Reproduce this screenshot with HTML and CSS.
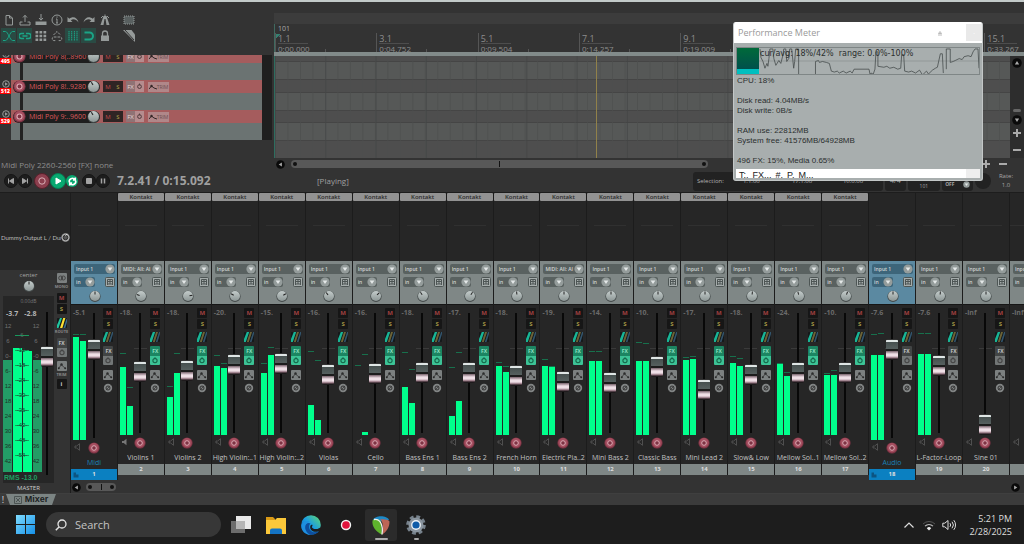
FILE: index.html
```html
<!DOCTYPE html>
<html lang="en">
<head>
<meta charset="utf-8">
<title>Mixer</title>
<link rel="stylesheet" href="styles.css">
</head>
<body>
<svg class="defs" aria-hidden="true">
  <defs>
    <linearGradient id="knobFill" x1="0" y1="0" x2="0" y2="1"><stop offset="0" stop-color="#c4cccb"/><stop offset="1" stop-color="#8c9695"/></linearGradient>
    <linearGradient id="edgeFill" x1="0" y1="1" x2="1" y2="0"><stop offset="0" stop-color="#0b59b0"/><stop offset=".5" stop-color="#1b9de2"/><stop offset="1" stop-color="#63dc6a"/></linearGradient>
    <linearGradient id="winFill" x1="0" y1="0" x2="1" y2="1"><stop offset="0" stop-color="#7fdcff"/><stop offset="1" stop-color="#1590e8"/></linearGradient>
    <symbol id="knob" viewBox="0 0 12 12"><circle cx="6" cy="6.4" r="5.6" fill="#444a4a"/><circle cx="6" cy="6" r="5" fill="url(#knobFill)"/></symbol>
    <symbol id="drop" viewBox="0 0 10 10"><circle cx="5" cy="5" r="4.6" fill="#949c9b"/><path d="M2.6 3.4h4.8L5 7z" fill="#e4e8e8"/></symbol>
    <symbol id="infx" viewBox="0 0 10 10"><rect x=".5" y=".5" width="9" height="9" rx="1" fill="#a4abaa" stroke="#4d5554"/><path d="M2.5 8V2.5h5V8M2.5 4.5h5M5 2.5v2M4 8V6h2v2" fill="none" stroke="#4d5554"/></symbol>
    <symbol id="route" viewBox="0 0 10 10"><rect width="10" height="10" rx="1" fill="#15191a"/><path d="M0 10V7L2.800 0h2.400L1.800 10z" fill="#18b596"/><path d="M2.800 10 6 0h2L4.800 10z" fill="#6d6436"/><path d="M5.800 10 9 0h1v2L7.500 10z" fill="#32546c"/></symbol>
    <symbol id="routeOn" viewBox="0 0 10 10"><rect width="10" height="10" rx="1" fill="#15191a"/><path d="M0 10V7L3 0h2L1.500 10z" fill="#20c5a0"/><path d="M3 10 6.200 0h2.200L5.400 10z" fill="#ffe033"/><path d="M6.500 10 9.500 1h.5v3L8.300 10z" fill="#3c6f90"/></symbol>
    <symbol id="power" viewBox="0 0 10 9"><circle cx="5" cy="4.600" r="2.100" fill="none" stroke="currentColor" stroke-width="1.100"/><path d="M5 1.200v2" stroke="currentColor"/></symbol>
    <symbol id="env" viewBox="0 0 10 10"><rect width="10" height="10" rx="1" fill="#7c8080"/><path d="M1.500 7.500 4.500 3.500l2 2.500 2 1.500" fill="none" stroke="#333" stroke-width=".8"/><circle cx="4.500" cy="3.500" r="1.200" fill="#2b2b2b"/><circle cx="1.800" cy="7.200" r="1" fill="#2b2b2b"/><circle cx="8.200" cy="7.200" r="1" fill="#2b2b2b"/></symbol>
    <symbol id="phase" viewBox="0 0 10 10"><circle cx="5" cy="5" r="4.200" fill="#828585"/><circle cx="5" cy="5" r="2" fill="none" stroke="#333"/><path d="M3 7.200 7 2.800" stroke="#333" stroke-width=".8"/></symbol>
    <symbol id="rec" viewBox="0 0 12 12"><circle cx="6" cy="6" r="5.600" fill="#7e3344"/><circle cx="6" cy="5.700" r="4.700" fill="#a54f60"/><circle cx="6" cy="6" r="2.300" fill="#7e3344" stroke="#dcaab4"/></symbol>
    <symbol id="spk" viewBox="0 0 8 8"><path d="M1 3h1.700L5.500.7v6.600L2.700 5H1z" fill="none" stroke="#5b5b5b" stroke-width=".8"/></symbol>
    <symbol id="spkOn" viewBox="0 0 8 8"><path d="M1 3h1.700L5.500.7v6.600L2.700 5H1z" fill="#777"/></symbol>
    <symbol id="tri" viewBox="0 0 10 10"><circle cx="5" cy="5" r="4.800" fill="#0a0a0a"/><path d="M6.500 2.800v4.400L3 5z" fill="#aaa"/></symbol>
    <symbol id="folder" viewBox="0 0 6 6"><path d="M.5.500h2.500v2h2.500V5.500h-5z" fill="#0c5482"/></symbol>
  </defs>
</svg>

<main class="app">
  <section class="upper">
    <div class="left">
      <div class="toolbar" role="toolbar" aria-label="Main toolbar">
        <button aria-label="New project"><svg viewBox="0 0 12 12"><path d="M3 1.500h3.500L9.500 4v7H3zM6.500 1.500V4h3"/></svg></button>
        <button aria-label="Open"><svg viewBox="0 0 12 12"><path d="M6 8V1.500M4 3.500 6 1.300l2 2.200M3.500 8H1v3h10V8H8.500" /></svg></button>
        <button aria-label="Save"><svg viewBox="0 0 12 12"><path d="M6 0v6M4 4l2 2.200L8 4"/><path class="solid" d="M.5 7.500h11v3.500H.5z"/></svg></button>
        <button aria-label="Project settings"><svg viewBox="0 0 12 12"><circle cx="6" cy="6" r="5"/><path d="M6 5v4M6 2.500v1.200M5 9h2M5 5h1"/></svg></button>
        <button aria-label="Undo"><svg viewBox="0 0 12 12"><path class="solid" d="M.5 3v5h5L3.800 6.300C6 4.500 9 5 11.500 8.500 10.500 3.500 6 1.500 2.300 4.700z"/></svg></button>
        <button aria-label="Redo"><svg viewBox="0 0 12 12"><path class="solid" d="M11.500 3v5h-5l1.700-1.700C6 4.500 3 5 .5 8.500 1.500 3.500 6 1.500 9.700 4.700z"/></svg></button>
        <button aria-label="Metronome"><svg viewBox="0 0 12 12"><path class="solid" d="M4.500 2h3L10.500 11H7.500L6.500 5h-1L4.500 11h-3z"/><path d="M6 4V.5M2 4l2-2M10 4 8 2"/></svg></button>
        <button class="spaced" aria-label="Marquee"><svg viewBox="0 0 12 12"><rect x="1" y="2" width="10" height="8" fill="#596060" stroke-dasharray="1 1"/></svg></button>
        <button class="on" aria-label="Auto crossfade"><svg viewBox="0 0 12 12"><path d="M0 1.500h2.500C5 1.500 7 10.500 9.500 10.500H12M0 10.500h2.500C5 10.500 7 1.500 9.500 1.500H12"/></svg></button>
        <button class="on" aria-label="Item grouping"><svg viewBox="0 0 12 12"><path d="M5 3.500H2.500a2.500 2.500 0 0 0 0 5H5M7 3.500h2.500a2.500 2.500 0 0 1 0 5H7M3.500 6h5" stroke-width="1.400"/></svg></button>
        <button aria-label="Ripple"><svg viewBox="0 0 12 12"><path stroke-width="2.600" stroke-dasharray="2.700 1.300" d="M.5 2.300h11M.5 6h11M.5 9.700h11"/></svg></button>
        <button aria-label="Envelope link"><svg viewBox="0 0 12 12"><path d="M5.500 7H3a1.700 1.700 0 0 0 0 3.600h2M6.500 7H9a1.700 1.700 0 0 1 0 3.600H7M2.500 5 6 1.500 9.500 5" stroke-dasharray="2.500 .7"/></svg></button>
        <button class="on" aria-label="Grid"><svg viewBox="0 0 12 12"><path d="M2 1v10M4.700 1v10M7.400 1v10M10 1v10" stroke-dasharray="1.500 .5"/></svg></button>
        <button class="on" aria-label="Snap"><svg viewBox="0 0 12 12"><path d="M1.500 2.500h5a3.500 3.500 0 0 1 0 7h-5" stroke-width="2"/></svg></button>
        <button aria-label="Lock"><svg viewBox="0 0 12 12"><path d="M3.500 6V3.500a2.500 2.500 0 0 1 5 0V6" stroke-width="1.300"/><path class="solid" d="M2 5.500h8V11H2z"/></svg></button>
        <button class="spaced" aria-label="Draw"><svg viewBox="0 0 12 12"><path class="solid" d="M0 0h8.500l3.500 4.500V12z"/><path d="M2 0l9 10" stroke="#333"/></svg></button>
      </div>
      <div class="tcp" id="tcp"></div>
      <p class="hint">Midi Poly 2260-2560 [FX] none</p>
    </div>

    <div class="arrange">
      <div class="band"></div>
      <div class="ruler" id="ruler"></div>
      <div class="canvas">
        <div class="lanes"><i></i><i></i><i></i><i></i><i></i><i></i><div class="gridlines"></div><div class="playhead"></div></div>
        <div class="vscroll">
          <svg class="up" viewBox="0 0 10 10"><use href="#tri"/></svg>
          <span class="grip"></span>
          <svg class="down" viewBox="0 0 10 10"><use href="#tri"/></svg>
          <button aria-label="Zoom in vertically" class="plus"></button>
          <button aria-label="Zoom out vertically" class="minus"></button>
        </div>
      </div>
      <div class="hscroll">
        <svg class="tri" viewBox="0 0 10 10"><use href="#tri"/></svg>
        <span class="pill"><b></b><i></i><b></b></span>
        <span class="gap"></span>
        <button aria-label="Zoom in" class="plus"></button>
        <button aria-label="Zoom out" class="minus"></button>
      </div>
    </div>
  </section>

  <section class="transport">
    <div class="keys">
      <button aria-label="Go to start"><svg viewBox="0 0 14 14"><path d="M4.500 4.500v5M9.500 4.500v5L5.500 7z"/></svg></button>
      <button aria-label="Go to end"><svg viewBox="0 0 14 14"><path d="M9.500 4.500v5M4.500 4.500v5L8.500 7z"/></svg></button>
      <button class="record" aria-label="Record"><svg viewBox="0 0 14 14"><circle cx="7" cy="7" r="3.200"/></svg></button>
      <button class="play" aria-label="Play"><svg viewBox="0 0 14 14"><path d="M5 4v6l5-3z"/></svg></button>
      <button class="repeat" aria-label="Repeat"><svg viewBox="0 0 14 14"><path d="M3 8a4 4 0 0 1 7-3.500M11 6a4 4 0 0 1-7 3.500M10.500 2v3h-3M3.500 12V9h3" fill="none" stroke-width="2"/></svg></button>
      <button class="stop" aria-label="Stop"><svg viewBox="0 0 14 14"><path d="M4.500 4.500h5v5h-5z"/></svg></button>
      <button aria-label="Pause"><svg viewBox="0 0 14 14"><path d="M5.500 4.500v5M8.500 4.500v5" stroke-width="1.500"/></svg></button>
    </div>
    <output class="clock">7.2.41 / 0:15.092</output>
    <span class="state">[Playing]</span>
    <div class="selection"><span>Selection:</span><span>1.1.00</span><span>17.1.00</span><span>16.0.00</span></div>
    <div class="cell">4/4</div>
    <div class="cell bpm">101</div>
    <div class="cell auto">OFF <svg viewBox="0 0 10 10"><use href="#drop"/></svg></div>
    <div class="dial"></div>
    <div class="rate"><span>Rate:</span><span>1.0</span></div>
  </section>

  <section class="mixer">
    <div class="master">
      <div class="hw"><span>Dummy Output L / Dur</span><svg viewBox="0 0 10 10"><circle cx="5" cy="5" r="4.600" fill="#a8a8a8"/><circle cx="5" cy="5" r="2.500" fill="#555" stroke="#222"/><path d="M5 3l2-2" stroke="#eee"/></svg></div>
      <div class="mbody">
        <div class="mmain">
          <div class="mpan"><span>center</span><svg viewBox="0 0 12 12"><use href="#knob"/><path d="M6 1.500v3" stroke="#222"/></svg></div>
          <div class="mwell">
            <span class="gain">0.00dB</span>
            <div class="peaks"><span>-3.7</span><span>-2.8</span></div>
            <div class="mrow">
              <div class="mmeter">
                <div class="bars"><i class="rms"></i><i class="pk"></i><i class="pk second"></i><i class="rms"></i></div>
                <ol class="side">
                  <li>12</li><li>6</li><li>0-</li><li>6-</li><li>12</li><li>18</li><li>24</li><li>30</li><li>36</li><li>42</li>
                </ol>
                <ol class="mid">
                  <li class="hot">-6-</li><li>-12-</li><li>-18-</li><li>-24-</li><li>-30-</li><li>-36-</li><li>-42-</li><li>-48-</li><li>-54-</li>
                </ol>
                <ol class="side">
                  <li>12</li><li>6</li><li>-0</li><li>-6</li><li>12</li><li>18</li><li>24</li><li>30</li><li>36</li><li>42</li>
                </ol>
              </div>
              <input class="fader" type="range" min="0" max="100" value="75" aria-label="Master volume">
            </div>
            <span class="rmsval">RMS -13.0</span>
          </div>
          <span class="mname">MASTER</span>
        </div>
        <div class="mside">
          <svg class="sq" viewBox="0 0 10 10"><rect width="10" height="10" rx="1" fill="#7c8080"/><circle cx="3.700" cy="5" r="2" fill="none" stroke="#444"/><circle cx="6.300" cy="5" r="2" fill="none" stroke="#444"/></svg>
          <small>MONO</small>
          <button class="btn m">M</button>
          <button class="btn s">S</button>
          <svg class="sq rt" viewBox="0 0 10 10"><use href="#routeOn"/></svg>
          <small>ROUTE</small>
          <div class="fx"><button>FX</button><button aria-label="Bypass effects"><svg viewBox="0 0 10 9"><use href="#power"/></svg></button></div>
          <svg class="sq" viewBox="0 0 10 10"><use href="#env"/></svg>
          <small>TRIM</small>
          <button class="btn info">i</button>
        </div>
      </div>
    </div>
    <div class="bank">
      <div class="strips" id="strips"></div>
      <div class="mscroll">
        <svg class="tri" viewBox="0 0 10 10"><use href="#tri"/></svg>
        <span class="pill"><b></b><i></i><b></b></span>
        <svg class="tri end" viewBox="0 0 10 10"><use href="#tri"/></svg>
      </div>
    </div>
  </section>

  <nav class="dock"><span class="bang">!</span><button class="tab"><svg viewBox="0 0 8 8"><path d="M.5.500h7v7h-7zM2 2l4 4M6 2 2 6" fill="none" stroke="#4c5453"/></svg>Mixer</button></nav>

  <footer class="taskbar">
    <button class="start" aria-label="Start"><svg viewBox="0 0 19 19"><path fill="url(#winFill)" d="M0 0h9v9H0zM10 0h9v9h-9zM0 10h9v9H0zM10 10h9v9h-9z"/></svg></button>
    <label class="search"><svg viewBox="0 0 12 12"><circle cx="7" cy="5" r="4" fill="none" stroke="#e4e4e4" stroke-width="1.300"/><path d="M4 8 .8 11.200" stroke="#e4e4e4" stroke-width="1.500"/></svg><input type="text" placeholder="Search" aria-label="Search"></label>
    <div class="pins">
      <button aria-label="Task view"><svg viewBox="0 0 20 20"><path d="M5 1h15v13H5z" fill="#e9e9e9"/><path d="M0 6h14v12H0z" fill="#777" opacity=".9"/><path d="M5 6h9v8H5z" fill="#b5b5b5"/></svg></button>
      <button aria-label="File Explorer"><svg viewBox="0 0 20 20"><path d="M0 2h7l2 2v4H0z" fill="#d99a16"/><path d="M0 5h9l2-2h9v16H0z" fill="#fbc83a"/><path d="M4 19v-3.500a2 2 0 0 1 2-2h8a2 2 0 0 1 2 2V19z" fill="#1474c4"/></svg></button>
      <button aria-label="Edge"><svg viewBox="0 0 20 20"><circle cx="10" cy="10" r="9.800" fill="url(#edgeFill)"/><path d="M9.500 8.500c-3 3-1 8.500 4 8.700 2 0 4-.7 5-1.700C16.500 19 11 21 6.500 19 3 17 2 12 5 9c1.500-1.300 3.500-1.300 4.500-.5z" fill="#0e4e9e"/><path d="M11 9.500c1 1 .3 2-.2 2.500.4 2 4.500 2.800 7.200 1.200l2.200-1L20 15l-3 1.500c-5 1.500-9-2-7.500-6z" fill="#1d1d1d"/><path d="M.3 10.500C1 7 5 5.500 8.500 6.500 5 8 3.500 11 4.500 14.500 5.300 17 7 19 9.500 19.800 4.500 20 0 16 .3 10.500z" fill="#1e8fe0"/></svg></button>
      <button aria-label="Recorder"><svg viewBox="0 0 20 20"><circle cx="10" cy="10" r="5.200" fill="#f4f4f4"/><circle cx="10" cy="10" r="3.800" fill="#e0143c"/></svg></button>
      <button class="active" aria-label="Reaper"><svg viewBox="0 0 20 20"><path d="M2 5C4 0 16 0 18 5L11 6.500z" fill="#1d8ac8"/><path d="M1.500 5.500C4 3 9 4 10 7l1 12.500C5 17 .5 11 1.500 5.500z" fill="#5fb32d"/><path d="M9 4.500c4-.5 8.500 0 9.500 2 0 6-3 10.500-7.500 13C13 13 12 6 9 4.500z" fill="#bd6556"/><path d="M3 4.500C9 3.500 12.500 10 11 19.500" fill="none" stroke="#f1f1f1" stroke-width="1.300"/></svg></button>
      <button class="running" aria-label="Settings"><svg viewBox="0 0 20 20"><circle cx="10" cy="10" r="8.300" fill="none" stroke="#77828c" stroke-width="3" stroke-dasharray="3.800 2.720"/><circle cx="10" cy="10" r="7.500" fill="#8a959f"/><circle cx="10" cy="10" r="4.900" fill="#eef3f7"/><circle cx="10" cy="10" r="3.600" fill="#0f5ca8"/></svg></button>
    </div>
    <div class="tray">
      <svg viewBox="0 0 14 14"><path d="m2.500 9.500 4.500-4.500 4.500 4.500" fill="none" stroke="#ddd" stroke-width="1.200"/></svg>
      <svg viewBox="0 0 14 14"><path d="M1 6a8.500 8.500 0 0 1 12 0" fill="none" stroke="#555"/><path d="M3 8.200a5.600 5.600 0 0 1 8 0" fill="none" stroke="#bbb" stroke-width="1.100"/><path d="M4.800 10.200a3 3 0 0 1 4.400 0L7 12.500z" fill="#eee"/></svg>
      <svg viewBox="0 0 14 14"><path d="M.8 5.200h2L6 2.500v9L2.800 8.800h-2zM8 5.200a3 3 0 0 1 0 3.600M10 3.700a5 5 0 0 1 0 6.600M11.800 2.200a7.500 7.500 0 0 1 0 9.600" fill="none" stroke="#ddd"/></svg>
      <time><span>5:21 PM</span><span>2/28/2025</span></time>
    </div>
  </footer>
</main>

<aside class="perf" role="dialog" aria-label="Performance Meter">
  <header><h1>Performance Meter</h1><svg viewBox="0 0 6 6"><path d="M1 5h4M1.500 3.500h3L3 1.500z" fill="none" stroke="#aaa" stroke-width=".8"/></svg><button aria-label="Close">·</button></header>
  <div class="graph">
    <div class="load"></div>
    <svg viewBox="0 0 222 27" preserveAspectRatio="none"><path d="M0 13.500h222" stroke="#8a9090" stroke-width=".7"/><path fill="none" stroke="#454b4b" stroke-width=".8" d="M1 1l1 9 2 4 2 7 2-5 1 3 1-8 1-10h3l1 10 2 7 3-5 2 3 2-8 1-7h2l1 13 2-3 1-10h2l2 20 1-7 1-13h3v26M57 27V14l3-1 1 2 3-1 4 1 3 1 2 8 3 1 3-1 2 2 4-2 3 2 4-2 2 2 2-4h15l1 5 2-1 1 2 2-6 1-18h2v15l6 1 3-1 3 2 4-1 4 2 3-1 1-14 2 0 1 17 4 1 3-1 4 2 4-3 3 5 4-4 2 3 4-4 3-2 2-1 3-14 2 0 1 20M189 22V1h4v14l3-1 2-1 4-2 3 1 2-3 4-1 3 1 2-5 2-3h3l1 20"/></svg>
    <span class="avg">cur/avg: 18%/42%&nbsp; range: 0.0%-100%</span>
  </div>
  <pre class="stats">CPU: 18%

Disk read: 4.04MB/s
Disk write: 0B/s

RAM use: 22812MB
System free: 41576MB/64928MB

496 FX: 15%, Media 0.65%</pre>
  <div class="cols"><span>T:.</span><span>FX...</span><span>#.</span><span>P.</span><span>M...</span></div>
</aside>
<script src="app.js"></script>
</body>
</html>
```
FILE: styles.css
```css
* { box-sizing: border-box; }
body, p, h1, ol, pre { margin: 0; padding: 0; }
body { background: #333; color: #a6a6a6; font-family: "Open Sans", "Noto Sans", sans-serif; font-size: 8px; line-height: 10px; }
button, input, select { font: inherit; color: inherit; border: 0; margin: 0; padding: 0; background: none; appearance: none; }
button { display: flex; align-items: center; justify-content: center; }
svg { display: block; flex: none; }
ol { list-style: none; }
.defs { position: absolute; width: 0; height: 0; }
.app { min-height: 100vh; display: flex; flex-direction: column; border-top: 2px solid #c3cac9; overflow: hidden; }

/* upper area */
.upper { display: flex; height: 168px; }
.left { flex: 0 0 274px; display: flex; flex-direction: column; }
.toolbar { display: grid; grid-template-columns: repeat(7, 16px) 32px; grid-auto-rows: 16px; padding: 10px 0 0 1px; height: 53px; }
.toolbar button { height: 15px; width: 15px; }
.toolbar .spaced { margin-left: 8px; }
.toolbar svg { width: 12px; height: 12px; fill: none; stroke: #959a99; }
.toolbar .solid { fill: #959a99; stroke: none; }
.toolbar .on { background: #2a4a43; }
.toolbar .on svg { stroke: #1ba486; }
.tcp { height: 85px; margin-right: 2px; display: flex; flex-direction: column; justify-content: flex-end; overflow: hidden; background: linear-gradient(90deg, transparent 262px, #1f1f1f 262px); }
.track { display: grid; grid-template-columns: 11px 251px; grid-template-rows: 13px 17px; flex: none; }
.track .num { grid-row: 1 / 3; display: flex; flex-direction: column; align-items: center; font: bold 5px/5px "Open Sans", sans-serif; color: #fff; }
.track .num svg { width: 8px; height: 8px; }
.track .num b { background: #f00; width: 11px; height: 6px; line-height: 6px; text-align: center; }
.track .row { background: #a55c5d; display: flex; align-items: center; }
.track .plate { width: 87px; height: 12px; margin-left: 2px; border-radius: 6px; background: #1e1e1e; color: #dc5a5c; display: flex; align-items: center; font-size: 7px; white-space: nowrap; }
.track .plate span { flex: 1; padding-left: 3px; }
.track .plate svg { width: 13px; height: 13px; }
.track .body { background: linear-gradient(90deg, #6b7372 9px, #222 9px 12px, #6b7372 12px); }
.track .pair { display: flex; margin-left: 3px; font: 6px/10px "Open Sans", sans-serif; }
.track .pair button { width: 10px; height: 11px; background: #2f2424; color: #c0494c; }
.track .pair .s { color: #b4a94a; }
.track .pair.f button { background: #8f7375; color: #e4d6d6; width: 9px; }
.track .pair.f button + button { background: #b58c8e; color: #4e3a3b; }
.track .pair svg { width: 9px; height: 9px; }
.track .trim { width: 21px; height: 10px; margin-left: 4px; background: #b08789; color: #6d5051; font: 5px/10px "Open Sans", sans-serif; }
.track .trim svg { width: 8px; height: 8px; }
.hint { padding: 20px 0 0 1px; line-height: 10px; white-space: nowrap; color: #8d8d8d; }

.arrange { flex: 1; min-width: 0; display: flex; flex-direction: column; padding-top: 11px; }
.band { height: 11px; background: #3c3c3c; }
.ruler { height: 28px; display: flex; overflow: hidden; border-left: 1px solid #3f6a60; background: linear-gradient(135deg, #35806f 4px, transparent 4px) 0 10px no-repeat; }
.mark { flex: 0 0 13.530%; padding-left: 3px; color: #8d8d8d; overflow: hidden; background: linear-gradient(#555, #555) 0 100%/1px 19px no-repeat, linear-gradient(#555, #555) 50% 100%/1px 3px no-repeat; }
.mark .tempo { height: 9px; font-size: 7px; line-height: 9px; color: #aaa; }
.mark .beat { width: 30px; height: 11px; font-size: 9px; line-height: 12px; border-bottom: 1px solid #4d4d4d; }
.mark .time { height: 8px; font-size: 8px; line-height: 10px; color: #8d8d8d; white-space: nowrap; }
.canvas { display: flex; flex: 1; border-top: 4px solid #828b8a; }
.lanes { position: relative; flex: 1; display: grid; grid-template-rows: 6px 18px 13px 18px 12px 18px 1fr; background: #4e4e4e; border-left: 1px solid #2e6e60; }
.lanes > i { border-bottom: 1px solid #454545; }
.lanes > i:nth-child(even) { background: #565857; }
.gridlines { position: absolute; inset: 0; background: linear-gradient(90deg, #434545 1px, transparent 1px) 0 0/6.840% 100%, linear-gradient(90deg, #4d4f4e 1px, transparent 1px) 0 0/1.700% 100%; opacity: .7; }
.playhead { position: absolute; top: 0; bottom: 0; left: 43.700%; width: 1px; background: #91814a; }
.vscroll { width: 14px; background: #2d2d2d; display: flex; flex-direction: column; align-items: center; padding-top: 2px; }
.vscroll svg { width: 10px; height: 10px; }
.up { transform: rotate(90deg); }
.down { transform: rotate(-90deg); }
.grip { width: 8px; height: 3px; border-radius: 2px; background: #666; margin: 41px 0 3px; }
.plus, .minus { width: 8px; height: 8px; flex: none; background: linear-gradient(#aaa, #aaa) center/8px 2px no-repeat; }
.plus { background: linear-gradient(#aaa, #aaa) center/8px 2px no-repeat, linear-gradient(#aaa, #aaa) center/2px 8px no-repeat; }
.vscroll .plus { margin-top: 4px; }
.vscroll .minus { margin-top: 9px; }
.hscroll { height: 12px; display: flex; align-items: center; padding: 0 17px 0 2px; background: #333; }
.tri { width: 9px; height: 9px; }
.tri.end { transform: scaleX(-1); margin-left: auto; }
.hscroll .tri { margin-right: 6px; }
.pill { display: flex; align-items: center; justify-content: space-between; height: 8px; padding: 0 2px; border-radius: 4px; background: #585858; }
.hscroll .pill { flex: 0 1 57%; }
.pill b { width: 4px; height: 4px; border-radius: 50%; background: #111; }
.pill i { width: 1px; height: 6px; background: #111; }
.gap { flex: 1; }
.hscroll .minus { margin-left: 9px; }

/* transport */
.transport { height: 22px; display: flex; align-items: center; padding: 0 8px 0 4px; }
.keys { display: flex; align-items: center; }
.keys button { width: 14px; height: 14px; border-radius: 50%; background: #1d1d1d; border: 1px solid #161616; }
.keys svg { width: 14px; height: 14px; fill: #a3a3a3; stroke: #a3a3a3; }
.keys .record { width: 16px; height: 16px; margin-left: 2px; background: #8c3f4e; border-color: #59202b; }
.keys .record svg { fill: none; stroke: #d9b0b6; }
.keys .play { width: 16px; height: 16px; background: #08a870; border-color: #067e54; }
.keys .play svg, .keys .repeat svg { fill: #fff; stroke: #fff; }
.keys .repeat { width: 12px; height: 12px; background: #08a870; border: 0; }
.keys .repeat svg { width: 11px; height: 11px; }
.keys .stop { margin-left: 4px; }
.clock { margin-left: 7px; font-size: 12px; line-height: 16px; font-weight: 700; color: #a0a0a0; white-space: nowrap; flex: 0 0 200px; }
.state { font-size: 8px; color: #a0a0a0; flex: 1; }
.selection { display: grid; grid-template-columns: 46px 49px 51px 36px; height: 19px; width: 190px; padding-left: 4px; margin-right: 2px; align-items: center; background: #222; border-radius: 3px; font-size: 6px; line-height: 8px; color: #b0b0b0; white-space: nowrap; }
.cell { height: 19px; width: 21px; margin-right: 2px; display: flex; align-items: center; justify-content: center; background: #222; border-radius: 3px; font-size: 7px; }
.bpm { width: 32px; font-size: 5px; align-items: flex-end; }
.auto { width: 31px; gap: 8px; font-size: 5px; font-weight: bold; align-items: flex-end; padding-bottom: 3px; line-height: 8px; }
.auto svg { width: 7px; height: 7px; }
.dial { width: 16px; height: 16px; border-radius: 50%; background: #222; margin-right: 8px; }
.rate { display: flex; flex-direction: column; align-items: center; margin-right: 3px; font-size: 6px; line-height: 9px; }

/* mixer */
.mixer { display: flex; height: 301px; border-top: 1px solid #1d1d1d; }
.master { flex: 0 0 71px; min-width: 0; display: flex; flex-direction: column; border-right: 1px solid #1d1d1d; }
.hw { flex: none; height: 77px; background: #262626; display: flex; align-items: center; padding: 12px 0 0 1px; font: 6px/10px Lato, "Open Sans", sans-serif; white-space: nowrap; color: #bbb; }
.hw span { width: 60px; overflow: hidden; }
.hw svg { width: 9px; height: 9px; }
.mbody { flex: 1; display: flex; min-width: 0; min-height: 0; }
.mmain { flex: 0 0 54px; display: flex; flex-direction: column; padding-left: 3px; }
.mpan { flex: none; display: flex; flex-direction: column; align-items: center; height: 26px; padding-top: 1px; font-size: 6px; line-height: 9px; }
.mpan svg { width: 12px; height: 12px; }
.mwell { flex: none; background: #262626; height: 187px; display: flex; flex-direction: column; align-items: center; }
.gain { font-size: 5px; line-height: 10px; color: #777; }
.peaks { align-self: flex-start; display: flex; gap: 6px; font: bold 7px/11px "Open Sans", sans-serif; padding: 2px 0 0 3px; color: #b4b4b4; }
.mrow { align-self: stretch; display: flex; height: 153px; flex: none; }
.mmeter { width: 38px; height: 153px; display: grid; grid-template-columns: 10px 18px 10px; }
.bars { grid-area: 1 / 1 / 2 / 4; display: grid; grid-template-columns: 9px 9px 9px 9px; gap: 0 1px; align-items: end; }
.bars .rms { height: 112px; background: #239c66; }
.bars .pk { height: 124px; background: #00ff8c; }
.bars .second { height: 121px; }
.side, .mid { grid-row: 1; z-index: 1; display: flex; flex-direction: column; text-align: center; font: 6px/15px "Liberation Sans", Arial, sans-serif; color: #1b3327; white-space: nowrap; }
.side:nth-of-type(1) { grid-column: 1; }
.mid { grid-column: 2; padding-top: 9px; }
.side:nth-of-type(3) { grid-column: 3; }
.mid li { background: linear-gradient(#159c5c, #159c5c) center/14px 1px no-repeat; color: #0f4a30; }
.side li { height: 15px; }
.side li:nth-child(-n+3) { color: #727272; }
.mid .hot { color: #517061; }
.mrow .fader { height: 168px; margin-top: -10px; width: 12px; flex: none; }
.rmsval { align-self: flex-start; font: bold 7px/11px "Liberation Sans", Arial, sans-serif; color: #1f9e63; white-space: nowrap; padding-left: 1px; }
.mname { text-align: center; font-size: 6px; line-height: 10px; color: #ccc; }
.mside { flex: 1; min-width: 0; display: flex; flex-direction: column; align-items: center; padding: 3px 1px 0 0; }
.mside small { font-size: 4px; line-height: 8px; font-weight: bold; color: #888; height: 8px; }
.sq { width: 10px; height: 10px; }
.btn { width: 10px; height: 10px; border-radius: 1px; background: #161616; font: bold 6px/10px "Open Sans", sans-serif; flex: none; }
.btn.m { color: #a04040; }
.btn.s { color: #a09444; }
.mside .btn.m { margin-top: 2px; }
.mside .btn.s { margin: 1px 0 4px; }
.rt { margin: 3px 0 4px; }
.mside .rt { margin: 0; }
.mside .fx { margin: 2px 0 4px; }
.btn.info { color: #ccc; }

.bank { flex: 1; min-width: 0; display: flex; flex-direction: column; }
.strips { display: grid; grid-template-columns: repeat(20, 10fr) 3fr; height: 288px; overflow: hidden; align-items: start; }
.strip { min-width: 0; overflow: hidden; background: #262626; border-right: 1px solid #1c1c1c; }
.strip:last-child { border-right: 0; }
.slot { height: 8px; width: 100%; background: transparent; font-size: 6px; font-weight: 600; line-height: 8px; color: #2c2c2c; }
.slot.filled { background: #929292; border-radius: 1px; }
.sends { height: 60px; background: linear-gradient(#303030, #303030) center 24px/32px 1px no-repeat; }
.input { height: 43px; background: #7f8786; padding: 3px; display: grid; grid-template-columns: 21px 10px 10px; grid-template-rows: 10px 10px 11px; row-gap: 3px; margin-right: -1px; border-right: 1px solid #6b7372; }
.pick { position: relative; display: flex; background: #596160; border-radius: 2px; color: #d3d7d6; font-size: 5px; font-weight: 600; }
.pick.wide { grid-column: 1 / 4; }
.pick select { width: 100%; line-height: 10px; padding-left: 2px; }
.pick svg { position: absolute; right: 0; top: 0; width: 10px; height: 10px; }
.infx { width: 10px; height: 10px; grid-column: 3; }
.pan { grid-column: 1 / 4; justify-self: center; width: 12px; height: 12px; }
.selected .input { background: #5b89a1; border-color: #3d6a82; }
.selected .pick { background: #3d657a; }
.channel { height: 146px; display: grid; grid-template-columns: 14px 13px 1fr; padding-left: 2px; border-top: 1px solid #161616; }
.selected .channel { height: 151px; }
.levels { display: flex; flex-direction: column; }
.db { font: bold 7px/10px "Open Sans", sans-serif; color: #6a6a6a; padding-top: 3px; white-space: nowrap; }
.meter { flex: 1; display: grid; grid-template-columns: 6px 6px; gap: 1px; margin-top: 1px; }
.bar { position: relative; display: flex; flex-direction: column; justify-content: flex-end; }
.bar i { background: #00ff8c; }
.bar b { position: absolute; left: 0; right: 0; height: 1px; background: #17704c; }
.spk { width: 8px; height: 8px; margin: 3px 0 4px 1px; }
.travel { display: flex; flex-direction: column; align-items: center; padding-top: 5px; background: linear-gradient(#3a3a3a, #3a3a3a) center 43px/13px 1px no-repeat; }
.fader { writing-mode: vertical-lr; direction: rtl; width: 12px; flex: 1; min-height: 0; background: linear-gradient(#080808, #080808) center/2px calc(100% - 5px) no-repeat; }
.fader::-webkit-slider-thumb { appearance: none; width: 12px; height: 21px; border-radius: 2px; border: 0; background: linear-gradient(#333 1px, #dfe6e5 1px 3px, #46504f 3px, #56605f 10px, #1c1c1c 10px 12px, #76606a 12px, #efdfe6 15px 17px, #8b6a77 19px, #1e1a1c 20px); }
.arm { width: 12px; height: 12px; margin: 2px 0 1px; flex: none; }
.arm svg { width: 12px; height: 12px; }
.side-btns { display: flex; flex-direction: column; align-items: center; padding-top: 3px; }
.side-btns .s { margin-top: 1px; }
.fx { width: 10px; height: 19px; border-radius: 1px; overflow: hidden; flex: none; }
.fx button { width: 10px; height: 10px; background: #424545; color: #c5c5c5; font: bold 5px/10px "Open Sans", sans-serif; }
.fx button + button { height: 9px; background: #727676; color: #444; }
.fx svg { width: 10px; height: 9px; }
.fx.on button { background: #1c8562; color: #8fe0c3; }
.fx.on button + button { background: #3cc396; color: #156448; }
.side-btns .env { margin: 5px 0 3px; }
.name { height: 14px; text-align: center; font-size: 7px; line-height: 16px; white-space: nowrap; color: #c2c2c2; display: flex; justify-content: center; }
.index { height: 11px; font: bold 6px/11px "Open Sans", sans-serif; color: #dedede; background: #7f8786; margin-right: -1px; border-right: 1px solid #6b7372; display: grid; grid-template-columns: 1fr 1fr 1fr; text-align: center; align-items: center; }
.index span { grid-column: 2; grid-row: 1; }
.index svg { width: 6px; height: 6px; margin-left: 2px; }
.selected .name { color: #1a80b8; }
.selected .index { background: #0b80c1; border-color: #0b80c1; }
.mscroll { height: 12px; display: flex; align-items: center; padding: 0 4px 0 1px; gap: 5px; }
.mscroll .pill { width: 30px; }

/* dock */
.dock { height: 12px; display: flex; background: #3b3b3b; border-top: 1px solid #3f3f3f; }
.bang { width: 6px; text-align: center; color: #ddd; font-size: 9px; line-height: 11px; }
.tab { width: 50px; gap: 3px; background: #7b8483; clip-path: polygon(0 0, 100% 0, 92% 100%, 8% 100%); color: #1b1f1f; font: bold 9px/11px "Liberation Sans", Arial, sans-serif; }
.tab svg { width: 8px; height: 8px; }

/* taskbar */
.taskbar { flex: 1; min-height: 39px; background: #1d1d1d; display: flex; align-items: center; padding: 0 12px 0 16px; }
.start svg { width: 19px; height: 19px; }
.search { margin-left: 11px; width: 175px; height: 25px; border-radius: 13px; background: #373737; display: flex; align-items: center; gap: 8px; padding-left: 9px; }
.search svg { width: 12px; height: 12px; }
.search input { flex: 1; min-width: 0; font-size: 11px; line-height: 16px; color: #ccc; }
.search input::placeholder { color: #c4c4c4; opacity: 1; }
.pins { display: flex; gap: 3px; margin-left: 4px; }
.pins button { width: 32px; height: 32px; border-radius: 3px; position: relative; }
.pins svg { width: 20px; height: 20px; }
.pins .active { background: #2b2b2b; }
.pins .active::after, .pins .running::after { content: ""; position: absolute; bottom: 1px; width: 13px; height: 2px; border-radius: 1px; background: #aaa; }
.pins .running::after { width: 5px; }
.tray { margin-left: auto; display: flex; align-items: center; gap: 6px; }
.tray svg { width: 14px; height: 14px; }
.tray time { display: flex; flex-direction: column; align-items: flex-end; width: 50px; font-size: 9px; line-height: 13px; color: #dedede; white-space: nowrap; }

/* floating performance window */
.perf { position: absolute; left: 733px; top: 22px; width: 250px; padding-bottom: 2px; border-radius: 3px; overflow: hidden; background: #a8aeae; border: 1px solid #c3c7c7; border-top: 0; color: #2b2f2f; }
.perf header { height: 21px; background: #fff; display: flex; align-items: center; padding-left: 4px; }
.perf h1 { flex: 1; font-size: 9px; line-height: 20px; font-weight: normal; color: #999; }
.perf header svg { width: 6px; height: 6px; margin-right: 23px; }
.perf header button { width: 16px; height: 17px; background: #e9e9e9; color: #fff; }
.graph { position: relative; display: flex; height: 28px; margin: 4px 2px 0; border: 1px solid #7f8686; }
.load { width: 22px; background: linear-gradient(#006a3a, #00504c 80%, #00bfbf 80%); }
.graph svg { flex: 1; min-width: 0; height: 26px; }
.avg { position: absolute; left: 23px; top: 0; font: 8px/12px "DejaVu Sans", sans-serif; white-space: nowrap; }
.stats { font: 8px/10px "Liberation Sans", Arial, sans-serif; padding: 1px 3px 3px; }
.cols { margin: 0 2px; height: 9px; overflow: hidden; background: #fff; border-right: 14px solid #eee; display: flex; gap: 4px; padding-left: 3px; font: 9px/12px "Liberation Sans", Arial, sans-serif; color: #222; }
```
FILE: app.js
```js
// name, dB label, fader 0-100, meter heights, peak-hold heights, pan angle
const strips = [
  { n: "Midi", db: "-5.1", f: 73, l: [103, 99], p: [105, 105], pan: 0, sel: 1 },
  { n: "Violins 1", db: "-18.", f: 51, l: [68, 29], p: [81, 47], pan: -70, midi: 1, fx: 1, loud: 1 },
  { n: "Violins 2", db: "-18.", f: 52, l: [38, 62], p: [48, 81], pan: 80, fx: 1 },
  { n: "High Violin:..1", db: "-20.", f: 58, l: [69, 67], p: [79, 71], pan: -60, fx: 1 },
  { n: "High Violin:..2", db: "-15.", f: 59, l: [62, 80], p: [71, 87], pan: 60, fx: 1 },
  { n: "Violas", db: "-16.", f: 48, l: [30, 15], p: [83, 74], pan: -40, fx: 1 },
  { n: "Cello", db: "-16.", f: 49, l: [0, 3], p: [69, 80], pan: 45, fx: 1 },
  { n: "Bass Ens 1", db: "-18.", f: 50, l: [48, 32], p: [82, 65], pan: -35, fx: 1 },
  { n: "Bass Ens 2", db: "-17.", f: 50, l: [19, 34], p: [67, 82], pan: 35, fx: 1 },
  { n: "French Horn", db: "-18.", f: 47, l: [69, 63], p: [72, 68], pan: -5, fx: 1 },
  { n: "Electric Pia..2", db: "-19.", f: 41, l: [69, 68], p: [75, 68], pan: 0, midi: 1, fx: 1 },
  { n: "Mini Bass 2", db: "-14.", f: 40, l: [74, 74], p: [83, 83], pan: 0, fx: 1 },
  { n: "Classic Bass", db: "-10.", f: 56, l: [74, 74], p: [92, 91], pan: 0, fx: 1 },
  { n: "Mini Lead 2", db: "-17.", f: 34, l: [75, 76], p: [77, 78], pan: 0, fx: 1 },
  { n: "Slow& Low", db: "-18.", f: 48, l: [72, 69], p: [78, 76], pan: 5, fx: 1 },
  { n: "Mellow Sol..1", db: "-24.", f: 50, l: [71, 59], p: [71, 62], pan: -15, fx: 1 },
  { n: "Mellow Sol..2", db: "-10.", f: 50, l: [60, 60], p: [61, 64], pan: 20, fx: 1 },
  { n: "Audio", db: "-7.6", f: 73, l: [85, 85], p: [105, 106], pan: 0, sel: 1 },
  { n: "L-Factor-Loop", db: "-7.6", f: 57, l: [81, 81], p: [101, 101], pan: 5 },
  { n: "Sine 01", db: "-inf", f: 0, l: [0, 0], p: [0, 0], pan: 0 },
  { n: "Sine 02", db: "-inf", f: 0, l: [0, 0], p: [0, 0], pan: 0, cut: 1 }
];
const icon = (id, cls, box = "0 0 10 10") => `<svg class="${cls}" viewBox="${box}"><use href="#${id}"/></svg>`;
const bar = (h, p) => `<div class="bar"><i style="height:${h}px"></i>${p ? `<b style="bottom:${p}px"></b>` : ""}</div>`;

document.getElementById("strips").innerHTML = strips.map((s, i) => `
<article class="strip${s.sel ? " selected" : ""}">
  ${i > 0 && i < 17 ? '<button class="slot filled">Kontakt</button>' : '<div class="slot"></div>'}
  <div class="sends"></div>
  <div class="input">
    <label class="pick wide"><select aria-label="Input for ${s.n}"><option>${s.midi ? "MIDI: All: Al" : "Input 1"}</option></select>${s.cut ? "" : icon("drop", "")}</label>
    <label class="pick"><select aria-label="Mode for ${s.n}"><option>in</option></select>${icon("drop", "")}</label>
    ${icon("infx", "infx")}
    <svg class="pan" viewBox="0 0 12 12"><use href="#knob"/><path d="M6 1.500v3" stroke="#222" transform="rotate(${s.pan} 6 6)"/></svg>
  </div>
  <div class="channel">
    <div class="levels"><span class="db">${s.db}</span><div class="meter">${bar(s.l[0], s.p[0])}${bar(s.l[1], s.p[1])}</div>${icon(s.loud ? "spkOn" : "spk", "spk", "0 0 8 8")}</div>
    ${s.cut ? "" : `<div class="travel"><input class="fader" type="range" min="0" max="100" value="${s.f}" aria-label="${s.n} volume"><button class="arm" aria-label="Arm ${s.n}">${icon("rec", "", "0 0 12 12")}</button></div>
    <div class="side-btns"><button class="btn m">M</button><button class="btn s">S</button>${icon("route", "sq rt")}
      <div class="fx${s.fx ? " on" : ""}"><button>FX</button><button aria-label="Bypass">${icon("power", "", "0 0 10 9")}</button></div>
      ${icon("env", "sq env")}${icon("phase", "sq")}</div>`}
  </div>
  <div class="name">${s.cut ? "" : s.n}</div>
  <div class="index">${s.sel ? icon("folder", "", "0 0 6 6") : ""}<span>${s.cut ? "" : i + 1}</span></div>
</article>`).join("");

const marks = [["1.1", "0:00.000"], ["3.1", "0:04.752"], ["5.1", "0:09.504"], ["7.1", "0:14.257"], ["9.1", "0:19.009"], ["11.1", "0:23.762"], ["13.1", "0:28.514"], ["15.1", "0:33.267"]];
document.getElementById("ruler").innerHTML = marks.map((m, i) =>
  `<div class="mark"><div class="tempo">${i ? "" : "101"}</div><div class="beat">${m[0]}</div><div class="time">${m[1]}</div></div>`).join("");

const tracks = [["495", "Midi Poly 8(..8960"], ["512", "Midi Poly 8!..9280"], ["529", "Midi Poly 9:..9600"]];
document.getElementById("tcp").innerHTML = tracks.map(t => `
<div class="track">
  <div class="num"><svg viewBox="0 0 8 8"><circle cx="4" cy="4" r="3.300" fill="none" stroke="#999"/><path d="M3 2.300v3.400L5.800 4z" fill="#999"/></svg><b>${t[0]}</b></div>
  <div class="row"><div class="plate">${icon("rec", "", "0 0 12 12")}<span>${t[1]}</span><svg viewBox="0 0 12 12"><use href="#knob"/><path d="M4 2l1.500 2.500" stroke="#222"/></svg></div>
    <div class="pair"><button>M</button><button class="s">S</button></div>
    <div class="pair f"><button>FX</button><button aria-label="Bypass">${icon("power", "", "0 0 10 9")}</button></div>
    <button class="trim"><svg viewBox="0 0 8 8"><path d="M0 6 2.500 3 5 5l3 1" fill="none" stroke="#332626"/><circle cx="2.500" cy="3" r="1.200" fill="#332626"/></svg>TRIM</button></div>
  <div class="body"></div>
</div>`).join("");
```
